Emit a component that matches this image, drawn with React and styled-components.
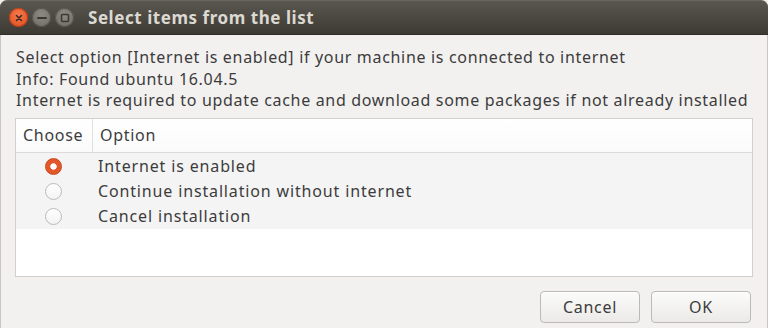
import React from "react";
import styled, { createGlobalStyle } from "styled-components";

const GlobalStyle = createGlobalStyle`
  html, body {
    margin: 0;
    padding: 0;
    background: #f2f1f0;
  }
  body {
    font-family: "Noto Sans", "Open Sans", sans-serif;
    color: #3c3c3c;
  }
`;

const options = [
  "Internet is enabled",
  "Continue installation without internet",
  "Cancel installation",
];

export default function App() {
  const [selected, setSelected] = React.useState(0);
  return (
    <>
      <GlobalStyle />
      <Window>
        <TitleBar>
          <WindowButtons>
            <CircleButton $close>
              <svg width="8" height="8" viewBox="0 0 8 8">
                <path d="M1.5 1.5L6.5 6.5M6.5 1.5L1.5 6.5" stroke="#3b2a22" strokeWidth="1.6" strokeLinecap="round" />
              </svg>
            </CircleButton>
            <CircleButton>
              <svg width="10" height="4" viewBox="0 0 10 4">
                <path d="M1 2H9" stroke="#3a3833" strokeWidth="2" strokeLinecap="round" />
              </svg>
            </CircleButton>
            <CircleButton>
              <svg width="10" height="10" viewBox="0 0 10 10">
                <rect x="1.5" y="1.5" width="7" height="7" rx="1" fill="none" stroke="#3a3833" strokeWidth="1.5" />
              </svg>
            </CircleButton>
          </WindowButtons>
          <Title>Select items from the list</Title>
        </TitleBar>
        <Body>
          <Message>
            <div>Select option [Internet is enabled] if your machine is connected to internet</div>
            <div>Info: Found ubuntu 16.04.5</div>
            <div>Internet is required to update cache and download some packages if not already installed</div>
          </Message>
          <Table>
            <HeaderRow>
              <HeaderCell $first>Choose</HeaderCell>
              <HeaderCell>Option</HeaderCell>
            </HeaderRow>
            <Rows>
              {options.map((label, i) => (
                <Row key={label} onClick={() => setSelected(i)}>
                  <RadioCell>
                    <Radio $on={selected === i} />
                  </RadioCell>
                  <Label>{label}</Label>
                </Row>
              ))}
            </Rows>
          </Table>
          <Actions>
            <Button>Cancel</Button>
            <Button>OK</Button>
          </Actions>
        </Body>
      </Window>
    </>
  );
}

const Window = styled.div`
  width: 768px;
  height: 328px;
  display: flex;
  flex-direction: column;
  overflow: hidden;
`;

const TitleBar = styled.div`
  height: 35px;
  flex-shrink: 0;
  display: flex;
  align-items: center;
  background: linear-gradient(#5a5650, #3d3a34);
  border-top: 1px solid #6a665e;
  border-top-right-radius: 7px;
  border-top-left-radius: 7px;
  box-sizing: border-box;
  padding-left: 9px;
  border-bottom: 1px solid #2f2d29;
`;

const WindowButtons = styled.div`
  display: flex;
  gap: 4px;
`;

const CircleButton = styled.div`
  width: 19px;
  height: 19px;
  border-radius: 50%;
  display: flex;
  align-items: center;
  justify-content: center;
  background: ${(p) =>
    p.$close
      ? "radial-gradient(circle at 50% 35%, #f7794b, #dc4a1c)"
      : "radial-gradient(circle at 50% 35%, #8d8a83, #6d6a64)"};
  box-shadow: inset 0 0 0 1px ${(p) => (p.$close ? "#b63c14" : "#55524c")};
`;

const Title = styled.div`
  margin-left: 14px;
  color: #dcd9d2;
  font-weight: bold;
  font-size: 17px;
  letter-spacing: 0.55px;
`;

const Body = styled.div`
  flex: 1;
  display: flex;
  flex-direction: column;
  padding: 12px 15px 0 14px;
  border-left: 1px solid #c9c6c2;
  border-right: 1px solid #c9c6c2;
`;

const Message = styled.div`
  font-size: 16px;
  letter-spacing: 0.68px;
  line-height: 21.5px;
  color: #3c3c3c;
  padding-left: 1px;
  margin-bottom: 6px;
  white-space: nowrap;
`;

const Table = styled.div`
  height: 157px;
  background: #ffffff;
  border: 1px solid #d3d0cc;
  display: flex;
  flex-direction: column;
  margin-right: -1px;
`;

const HeaderRow = styled.div`
  height: 33px;
  display: grid;
  grid-template-columns: 77px 1fr;
  border-bottom: 1px solid #dcdad6;
  background: linear-gradient(#ffffff, #fafafa);
`;

const HeaderCell = styled.div`
  display: flex;
  align-items: center;
  padding-left: 7px;
  font-size: 16px;
  letter-spacing: 0.7px;
  color: #3c3c3c;
  border-right: ${(p) => (p.$first ? "1px solid #e2e0dc" : "none")};
`;

const Rows = styled.div`
  background: #f4f4f4;
  display: flex;
  flex-direction: column;
  padding-top: 1px;
`;

const Row = styled.div`
  height: 25px;
  display: grid;
  grid-template-columns: 77px 1fr;
  align-items: center;
  cursor: pointer;
`;

const RadioCell = styled.div`
  display: flex;
  justify-content: center;
  padding-right: 2px;
`;

const Radio = styled.div`
  width: 17px;
  height: 17px;
  border-radius: 50%;
  box-sizing: border-box;
  background: ${(p) =>
    p.$on
      ? "radial-gradient(circle, #ffffff 0 2.8px, #e2582b 3.6px)"
      : "linear-gradient(#ffffff, #f3f3f3)"};
  border: 1px solid ${(p) => (p.$on ? "#c8471d" : "#bdbbb7")};
`;

const Label = styled.div`
  font-size: 16px;
  letter-spacing: 0.85px;
  color: #3c3c3c;
  padding-left: 5px;
  white-space: nowrap;
`;

const Actions = styled.div`
  display: flex;
  justify-content: flex-end;
  gap: 11px;
  margin-top: 14px;
  padding-right: 1px;
`;

const Button = styled.button`
  width: 100px;
  height: 32px;
  border: 1px solid #bdbab5;
  border-radius: 4px;
  background: linear-gradient(#fbfbfa, #eceae8);
  font-family: "Noto Sans", "Open Sans", sans-serif;
  font-size: 16px;
  letter-spacing: 0.7px;
  color: #3c3c3c;
  box-shadow: 0 1px 0 rgba(255, 255, 255, 0.8) inset;
`;
